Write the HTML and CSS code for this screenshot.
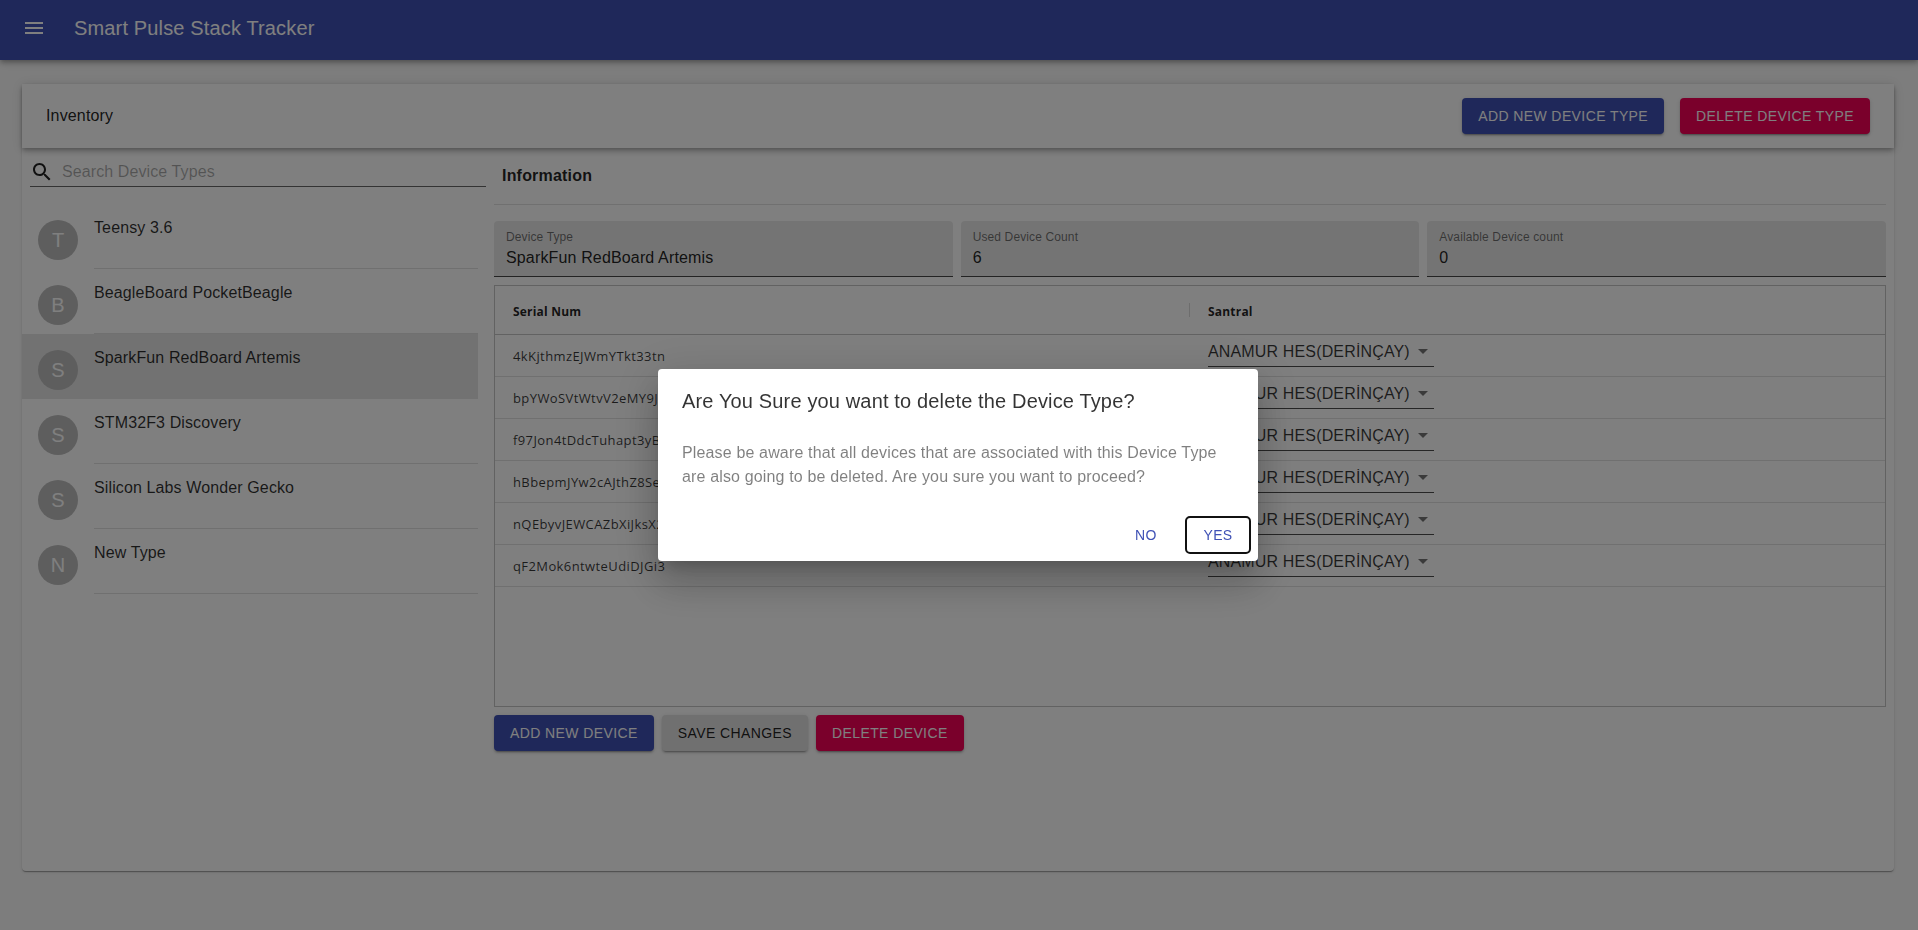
FILE: index.html
```html
<!DOCTYPE html>
<html lang="en">
<head>
<meta charset="utf-8">
<title>Smart Pulse Stack Tracker</title>
<link rel="stylesheet" href="styles.css">
</head>
<body>
<header class="appbar">
  <svg class="icon" viewBox="0 0 24 24"><path d="M3 18h18v-2H3v2zm0-5h18v-2H3v2zm0-7v2h18V6H3z"/></svg>
  <h1 class="app-title">Smart Pulse Stack Tracker</h1>
</header>
<main class="main">
  <section class="card">
    <div class="card-head">
      <span class="card-title">Inventory</span>
      <div class="btn-row gap-head">
        <button class="btn primary">Add new device type</button>
        <button class="btn danger">Delete device type</button>
      </div>
    </div>
    <div class="card-body">
      <aside class="side">
        <div class="search">
          <svg class="icon dark" viewBox="0 0 24 24"><path d="M15.5 14h-.79l-.28-.27C15.41 12.59 16 11.11 16 9.5 16 5.91 13.09 3 9.5 3S3 5.91 3 9.5 5.91 16 9.5 16c1.61 0 3.09-.59 4.23-1.57l.27.28v.79l5 4.99L20.49 19l-4.99-5zm-6 0C7.01 14 5 11.99 5 9.5S7.01 5 9.5 5 14 7.01 14 9.5 11.99 14 9.5 14z"/></svg>
          <input class="search-input" placeholder="Search Device Types">
        </div>
        <ul class="list">
          <li class="item"><span class="avatar">T</span><span class="item-text">Teensy 3.6</span></li>
          <li class="item"><span class="avatar">B</span><span class="item-text">BeagleBoard PocketBeagle</span></li>
          <li class="item selected"><span class="avatar">S</span><span class="item-text">SparkFun RedBoard Artemis</span></li>
          <li class="item"><span class="avatar">S</span><span class="item-text">STM32F3 Discovery</span></li>
          <li class="item"><span class="avatar">S</span><span class="item-text">Silicon Labs Wonder Gecko</span></li>
          <li class="item"><span class="avatar">N</span><span class="item-text">New Type</span></li>
        </ul>
      </aside>
      <div class="info">
        <h2 class="info-title">Information</h2>
        <div class="fields">
          <div class="field"><span class="field-label">Device Type</span><span class="field-value">SparkFun RedBoard Artemis</span></div>
          <div class="field"><span class="field-label">Used Device Count</span><span class="field-value">6</span></div>
          <div class="field"><span class="field-label">Available Device count</span><span class="field-value">0</span></div>
        </div>
        <div class="table">
          <div class="row head">
            <div class="cell">Serial Num</div>
            <div class="cell second"><span class="sep"></span>Santral</div>
          </div>
          <div class="row"><div class="cell">4kKjthmzEJWmYTkt33tn</div><div class="cell second"><div class="select"><span>ANAMUR HES(DERİNÇAY)</span><span class="caret"></span></div></div></div>
          <div class="row"><div class="cell">bpYWoSVtWtvV2eMY9J3a</div><div class="cell second"><div class="select"><span>ANAMUR HES(DERİNÇAY)</span><span class="caret"></span></div></div></div>
          <div class="row"><div class="cell">f97Jon4tDdcTuhapt3yB</div><div class="cell second"><div class="select"><span>ANAMUR HES(DERİNÇAY)</span><span class="caret"></span></div></div></div>
          <div class="row"><div class="cell">hBbepmJYw2cAJthZ8Se4</div><div class="cell second"><div class="select"><span>ANAMUR HES(DERİNÇAY)</span><span class="caret"></span></div></div></div>
          <div class="row"><div class="cell">nQEbyvJEWCAZbXiJksX2</div><div class="cell second"><div class="select"><span>ANAMUR HES(DERİNÇAY)</span><span class="caret"></span></div></div></div>
          <div class="row"><div class="cell">qF2Mok6ntwteUdiDJGi3</div><div class="cell second"><div class="select"><span>ANAMUR HES(DERİNÇAY)</span><span class="caret"></span></div></div></div>
        </div>
        <div class="btn-row gap-foot">
          <button class="btn primary">Add new device</button>
          <button class="btn neutral">Save changes</button>
          <button class="btn danger">Delete device</button>
        </div>
      </div>
    </div>
  </section>
</main>
<div class="overlay">
  <div class="dialog" role="dialog">
    <h2 class="dialog-title">Are You Sure you want to delete the Device Type?</h2>
    <p class="dialog-text">Please be aware that all devices that are associated with this Device Type are also going to be deleted. Are you sure you want to proceed?</p>
    <div class="dialog-actions">
      <button class="text-btn">No</button>
      <button class="text-btn focused">Yes</button>
    </div>
  </div>
</div>
</body>
</html>
```
FILE: styles.css
```css
* { box-sizing: border-box; }
html, body { height: 100%; }
body {
  margin: 0;
  height: 930px;
  overflow: hidden;
  background: #fafafa;
  color: rgba(0,0,0,.87);
  font-family: "Liberation Sans", Arial, sans-serif;
}
.appbar {
  height: 60px;
  padding: 0 0 4px 22px;
  display: flex;
  align-items: center;
  background: #3f51b5;
  color: #fff;
  box-shadow: 0 2px 4px -1px rgba(0,0,0,.2), 0 4px 5px 0 rgba(0,0,0,.14), 0 1px 10px 0 rgba(0,0,0,.12);
}
.icon { width: 24px; height: 24px; fill: currentColor; flex: none; }
.icon.dark { color: rgba(0,0,0,.87); }
.app-title { margin: 0 0 0 28px; font-size: 20px; font-weight: 400; letter-spacing: .0075em; line-height: 1.6; }
.main { padding: 24px 24px 0 22px; }
.card {
  height: 787px;
  background: #fff;
  border-radius: 4px;
  box-shadow: 0 2px 1px -1px rgba(0,0,0,.2), 0 1px 1px 0 rgba(0,0,0,.14), 0 1px 3px 0 rgba(0,0,0,.12);
}
.card-head {
  position: relative;
  height: 64px;
  padding: 0 24px;
  display: flex;
  align-items: center;
  justify-content: space-between;
  background: #fff;
  box-shadow: 0 2px 4px -1px rgba(0,0,0,.2), 0 4px 5px 0 rgba(0,0,0,.14), 0 1px 10px 0 rgba(0,0,0,.12);
}
.card-title { font-size: 16px; letter-spacing: .15px; }
.btn-row { display: flex; }
.gap-head { gap: 16px; }
.gap-foot { gap: 8px; margin-top: 8px; }
.btn {
  height: 36px;
  padding: 0 16px;
  border: 0;
  border-radius: 4px;
  font: 400 14px "Liberation Sans", Arial, sans-serif;
  letter-spacing: .02857em;
  text-transform: uppercase;
  box-shadow: 0 3px 1px -2px rgba(0,0,0,.2), 0 2px 2px 0 rgba(0,0,0,.14), 0 1px 5px 0 rgba(0,0,0,.12);
}
.primary { background: #3f51b5; color: #fff; }
.danger { background: #f50057; color: #fff; }
.neutral { background: #e0e0e0; color: rgba(0,0,0,.87); }
.card-body { display: grid; grid-template-columns: 464px 1392px; column-gap: 8px; }
.side { min-width: 0; }
.search {
  margin: 9px 0 0 8px;
  height: 30px;
  display: flex;
  align-items: center;
  gap: 8px;
  border-bottom: 1px solid rgba(0,0,0,.6);
}
.search-input {
  flex: 1;
  border: 0;
  outline: 0;
  padding: 0;
  background: transparent;
  font: 16px "Liberation Sans", Arial, sans-serif;
  letter-spacing: .1px;
}
.search-input::placeholder { color: rgba(0,0,0,.34); opacity: 1; }
.list { list-style: none; margin: 17px 0 0; padding: 0; width: 456px; }
.item { height: 65px; padding-left: 16px; display: flex; }
.avatar {
  width: 40px;
  height: 40px;
  margin-top: 16px;
  flex: none;
  border-radius: 50%;
  background: #bdbdbd;
  color: #fff;
  font-size: 20px;
  display: flex;
  align-items: center;
  justify-content: center;
}
.item-text {
  flex: 1;
  margin-left: 16px;
  padding-top: 12px;
  font-size: 16px;
  line-height: 24px;
  letter-spacing: .12px;
  color: rgba(0,0,0,.82);
  border-bottom: 1px solid rgba(0,0,0,.12);
}
.selected { background: rgba(0,0,0,.1); }
.selected .item-text { border-bottom-color: transparent; }
.info { min-width: 0; }
.info-title {
  margin: 0;
  height: 57px;
  padding: 0 8px;
  display: flex;
  align-items: center;
  font-size: 16px;
  font-weight: 700;
  letter-spacing: .2px;
  border-bottom: 1px solid rgba(0,0,0,.12);
}
.fields { display: flex; gap: 8px; margin-top: 16px; }
.field {
  flex: 1;
  height: 56px;
  padding: 9px 12px 0;
  display: flex;
  flex-direction: column;
  background: rgba(0,0,0,.09);
  border-radius: 4px 4px 0 0;
  border-bottom: 1px solid rgba(0,0,0,.7);
}
.field-label { font-size: 12px; line-height: 14px; letter-spacing: .12px; color: rgba(0,0,0,.54); }
.field-value { margin-top: 4px; font-size: 16px; line-height: 19px; letter-spacing: .15px; }
.table {
  margin-top: 8px;
  height: 422px;
  border: 1px solid rgba(0,0,0,.23);
  font-family: "Open Sans", sans-serif;
  font-size: 13px;
}
.row {
  height: 42px;
  display: grid;
  grid-template-columns: 695px 1fr;
  border-bottom: 1px solid #e0e0e0;
}
.row.head { height: 49px; font-weight: 700; font-size: 12px; letter-spacing: .2px; border-bottom-color: rgba(0,0,0,.23); }
.cell { padding-left: 18px; line-height: 43px; letter-spacing: .4px; color: rgba(0,0,0,.78); white-space: nowrap; overflow: hidden; }
.head .cell { line-height: 48px; letter-spacing: .2px; color: rgba(0,0,0,.87); padding-top: 2px; display: flex; align-items: center; }
.cell.second { position: relative; overflow: visible; }
.sep { position: absolute; left: -1px; top: 17px; width: 1px; height: 14px; background: rgba(0,0,0,.14); }
.select {
  width: 226px;
  height: 32px;
  padding: 2px 6px 0 0;
  display: flex;
  align-items: center;
  justify-content: space-between;
  font-family: "Liberation Sans", Arial, sans-serif;
  font-size: 16px;
  line-height: 19px;
  letter-spacing: .15px;
  color: rgba(0,0,0,.78);
  border-bottom: 1px solid rgba(0,0,0,.7);
}
.caret {
  width: 0;
  height: 0;
  border-left: 5px solid transparent;
  border-right: 5px solid transparent;
  border-top: 5px solid rgba(0,0,0,.54);
}
.overlay {
  position: fixed;
  inset: 0;
  padding-right: 2px;
  display: flex;
  align-items: center;
  justify-content: center;
  background: rgba(0,0,0,.5);
}
.dialog {
  width: 600px;
  height: 192px;
  background: #fff;
  border-radius: 4px;
  box-shadow: 0 11px 15px -7px rgba(0,0,0,.2), 0 24px 38px 3px rgba(0,0,0,.14), 0 9px 46px 8px rgba(0,0,0,.12);
}
.dialog-title { margin: 0; padding: 16px 24px; font-size: 20px; font-weight: 400; line-height: 32px; letter-spacing: .0075em; color: rgba(0,0,0,.8); }
.dialog-text { margin: 8px 24px 0; font-size: 16px; line-height: 24px; letter-spacing: .00938em; color: rgba(0,0,0,.5); }
.dialog-actions { margin-top: 20px; padding: 8px; display: flex; justify-content: flex-end; gap: 8px; }
.text-btn {
  width: 64px;
  height: 36px;
  border: 0;
  border-radius: 4px;
  background: transparent;
  color: #3f51b5;
  font: 400 14px "Liberation Sans", Arial, sans-serif;
  letter-spacing: .02857em;
  text-transform: uppercase;
}
.focused { outline: 2px solid #111; outline-offset: -1px; }
```
